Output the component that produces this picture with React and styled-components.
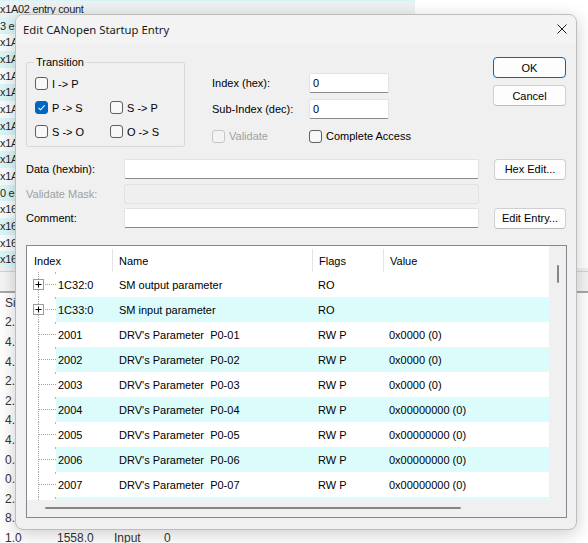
import React from 'react';
import styled, { createGlobalStyle } from 'styled-components';

const GlobalStyle = createGlobalStyle`
  html, body { margin: 0; padding: 0; background: #fff; }
  body { width: 588px; height: 543px; overflow: hidden; font-family: "Liberation Sans", Arial, sans-serif; }
  * { box-sizing: border-box; }
`;

/* ---------- background application ---------- */
const Screen = styled.div`
  position: relative;
  width: 588px;
  height: 543px;
  overflow: hidden;
  background: #fff;
  display: flex;
  flex-direction: column;
`;

const TopPane = styled.div`
  height: 268px;
  flex: none;
  overflow: hidden;
  display: flex;
`;

const TopList = styled.div`
  width: 415px;
  display: flex;
  flex-direction: column;
`;

const TopEdge = styled.div`
  height: 1px;
  flex: none;
  background: #d6f3f5;
`;

const BgRow = styled.div`
  height: 16.7px;
  flex: none;
  line-height: 16.7px;
  font-size: 11px;
  letter-spacing: -0.3px;
  color: #1e1e1e;
  white-space: nowrap;
  background: ${(p) => (p.$tone === 'cyan' ? '#dcf6f7' : p.$tone === 'gray' ? '#eef1f1' : '#f7fdfd')};
`;

const Splitter = styled.div`
  height: 3px;
  flex: none;
  background: #f0f0f0;
`;

const BottomHeader = styled.div`
  height: 22px;
  flex: none;
  background: #f4f4f4;
  border-top: 1px solid #d4d4d4;
  border-bottom: 2px solid #a8a8a8;
`;

const BottomList = styled.div`
  display: flex;
  flex-direction: column;
`;

const BottomRow = styled.div`
  height: 19.6px;
  flex: none;
  display: grid;
  grid-template-columns: 52px 57px 50px auto;
  align-items: center;
  padding-left: 5px;
  font-size: 12px;
  color: #333;
  white-space: nowrap;
`;

/* ---------- dialog ---------- */
const Dialog = styled.div`
  position: absolute;
  left: 15px;
  top: 14px;
  width: 562px;
  height: 516px;
  background: #f0f0f0;
  border: 1px solid #bdbdbd;
  border-radius: 8px;
  box-shadow: 0 4px 18px rgba(0, 0, 0, 0.2);
  display: flex;
  flex-direction: column;
  overflow: hidden;
  font-size: 11px;
  color: #000;
`;

const TitleBar = styled.div`
  height: 29px;
  flex: none;
  background: #f3f3f3;
  display: flex;
  align-items: center;
  justify-content: space-between;
  padding: 0 9px 1px 7px;
`;

const TitleText = styled.span`
  font-family: "Noto Sans", "Open Sans", sans-serif;
  font-size: 11.3px;
  color: #1a1a1a;
`;

const CloseIcon = styled.svg`
  width: 10px;
  height: 10px;
  display: block;
`;

const Body = styled.div`
  flex: 1;
  display: flex;
  flex-direction: column;
  padding: 13px 10px 11px 10px;
`;

const TopSection = styled.div`
  display: flex;
  align-items: flex-start;
  height: 90px;
`;

const GroupBox = styled.div`
  position: relative;
  margin-top: 5px;
  width: 159px;
  height: 85px;
  border: 1px solid #d9d9d9;
  border-radius: 2px;
`;

const GroupLegend = styled.span`
  position: absolute;
  left: 7px;
  top: -7px;
  padding: 0 2px;
  line-height: 13px;
  background: #f0f0f0;
`;

const CheckGrid = styled.div`
  display: grid;
  grid-template-columns: 75px auto;
  grid-auto-rows: 13px;
  row-gap: 11px;
  padding: 14px 0 0 8px;
`;

const CheckItem = styled.label`
  display: flex;
  align-items: center;
  gap: 4px;
  height: 13px;
  white-space: nowrap;
  color: ${(p) => (p.$disabled ? '#a0a0a0' : '#000')};
`;

const Box = styled.span`
  width: 13px;
  height: 13px;
  flex: none;
  border-radius: 3px;
  display: flex;
  align-items: center;
  justify-content: center;
  border: 1px solid ${(p) => (p.$checked ? '#0067c0' : p.$disabled ? '#c6c6c6' : '#5f5f5f')};
  background: ${(p) => (p.$checked ? '#0067c0' : p.$disabled ? '#f3f3f3' : '#f8f8f8')};
`;

const Fields = styled.div`
  margin-left: 27px;
  margin-top: 16px;
  display: grid;
  grid-template-columns: 97px 80px;
  grid-template-rows: 20px 20px 22px;
  row-gap: 6px;
  align-items: center;
  white-space: nowrap;
`;

const FieldLabel = styled.span`
  color: ${(p) => (p.$disabled ? '#a0a0a0' : '#000')};
  white-space: nowrap;
`;

const Input = styled.div`
  height: 20px;
  background: ${(p) => (p.$disabled ? '#efefef' : '#fff')};
  border: 1px solid ${(p) => (p.$disabled ? '#e2e2e2' : '#e3e3e3')};
  border-bottom-color: ${(p) => (p.$disabled ? '#e2e2e2' : '#8a8a8a')};
  border-radius: 2px;
  padding-left: 3px;
  display: flex;
  align-items: center;
`;

const ButtonColumn = styled.div`
  margin-left: auto;
  width: 73px;
  display: flex;
  flex-direction: column;
  gap: 7px;
`;

const Button = styled.div`
  height: 21px;
  width: ${(p) => p.$w || 73}px;
  border: 1px solid ${(p) => (p.$default ? '#0067c0' : '#d0d0d0')};
  border-bottom-color: ${(p) => (p.$default ? '#0067c0' : '#bcbcbc')};
  border-radius: 4px;
  background: #fdfdfd;
  display: flex;
  align-items: center;
  justify-content: center;
  justify-self: end;
  white-space: nowrap;
`;

const MidSection = styled.div`
  margin-top: 12px;
  display: grid;
  grid-template-columns: 98px 355px 1fr;
  grid-template-rows: 20px 20px 20px;
  row-gap: 4.5px;
  align-items: center;
`;

/* ---------- list view ---------- */
const ListBox = styled.div`
  margin-top: 17px;
  margin-right: -1px;
  height: 273px;
  flex: none;
  border: 1px solid #828790;
  display: grid;
  grid-template-columns: 1fr 17px;
  grid-template-rows: 1fr 17px;
  background: #fff;
`;

const ListContent = styled.div`
  overflow: hidden;
  display: flex;
  flex-direction: column;
`;

const HeaderRow = styled.div`
  height: 26px;
  flex: none;
  display: grid;
  grid-template-columns: 86px 200px 71px 1fr;
`;

const HeaderCell = styled.div`
  margin-top: 3px;
  height: 23px;
  display: flex;
  align-items: center;
  padding-left: ${(p) => p.$pad}px;
  border-right: ${(p) => (p.$last ? 'none' : '1px solid #e5e5e5')};
`;

const Row = styled.div`
  height: 25px;
  flex: none;
  display: grid;
  grid-template-columns: 29px 1fr;
`;

const TreeCell = styled.div`
  display: flex;
  align-items: center;
  padding-left: 6px;
  background-image:
    repeating-linear-gradient(to bottom, #a3a3a3 0 1px, transparent 1px 2px),
    repeating-linear-gradient(to right, #a3a3a3 0 1px, transparent 1px 2px);
  background-size: 1px 100%, 17px 1px;
  background-position: 11px 0, 12px 12px;
  background-repeat: no-repeat;
`;

const ExpandBox = styled.svg`
  width: 11px;
  height: 11px;
  display: block;
  background: #fff;
`;

const RowBody = styled.div`
  position: relative;
  display: grid;
  grid-template-columns: 57px 199px 71px 1fr;
  align-items: center;
  background: ${(p) => (p.$alt ? '#dcfcfc' : '#fff')};
  white-space: pre;
  &::before {
    content: '';
    position: absolute;
    left: -1px;
    top: 0;
    width: 1px;
    height: 2px;
    background: #5fd9e0;
  }
`;

const Cell = styled.span`
  padding-left: ${(p) => p.$pad}px;
  overflow: hidden;
`;

const VScroll = styled.div`
  background: #f0f0f0;
  display: flex;
  flex-direction: column;
  align-items: center;
  padding-top: 19px;
`;

const VThumb = styled.div`
  width: 2px;
  height: 18px;
  border-radius: 1px;
  background: #868686;
`;

const HScroll = styled.div`
  background: #f0f0f0;
  padding: 7px 0 0 18px;
`;

const HThumb = styled.div`
  width: 416px;
  height: 2px;
  border-radius: 1px;
  background: #868686;
`;

const Corner = styled.div`
  background: #f0f0f0;
`;

/* ---------- data ---------- */
const topRows = [
  'x1A02 entry count',
  '3 entries',
  'x1A02:01',
  'x1A02:02',
  'x1A02:03',
  'x1A03 clear',
  'x1A03 entry',
  'x1A03:01',
  'x1A03:02',
  'x1A03:03',
  'x1A03 count',
  '0 entries',
  'x1600 clear',
  'x1600 entry',
  'x1601 clear',
  'x1601 entry',
];

const bottomRows = [
  ['Si', '', '', ''],
  ['2.0', '', '', ''],
  ['4.0', '', '', ''],
  ['4.0', '', '', ''],
  ['2.0', '', '', ''],
  ['2.0', '', '', ''],
  ['4.0', '', '', ''],
  ['4.0', '', '', ''],
  ['0.1', '', '', ''],
  ['0.1', '', '', ''],
  ['2.0', '', '', ''],
  ['8.0', '', '', ''],
  ['1.0', '1558.0', 'Input', '0'],
];

const listRows = [
  { exp: true, idx: '1C32:0', name: 'SM output parameter', flags: 'RO', value: '' },
  { exp: true, idx: '1C33:0', name: 'SM input parameter', flags: 'RO', value: '' },
  { idx: '2001', name: "DRV's Parameter  P0-01", flags: 'RW P', value: '0x0000 (0)' },
  { idx: '2002', name: "DRV's Parameter  P0-02", flags: 'RW P', value: '0x0000 (0)' },
  { idx: '2003', name: "DRV's Parameter  P0-03", flags: 'RW P', value: '0x0000 (0)' },
  { idx: '2004', name: "DRV's Parameter  P0-04", flags: 'RW P', value: '0x00000000 (0)' },
  { idx: '2005', name: "DRV's Parameter  P0-05", flags: 'RW P', value: '0x00000000 (0)' },
  { idx: '2006', name: "DRV's Parameter  P0-06", flags: 'RW P', value: '0x00000000 (0)' },
  { idx: '2007', name: "DRV's Parameter  P0-07", flags: 'RW P', value: '0x00000000 (0)' },
  { idx: '2008', name: "DRV's Parameter  P0-08", flags: 'RW P', value: '0x00000000 (0)' },
];

const Check = ({ checked, disabled }) => (
  <Box $checked={checked} $disabled={disabled}>
    {checked && (
      <svg width="9" height="9" viewBox="0 0 9 9">
        <path d="M1.5 4.8 L3.6 6.8 L7.6 2.4" fill="none" stroke="#fff" strokeWidth="1.1" />
      </svg>
    )}
  </Box>
);

const CheckBox = ({ label, checked, disabled }) => (
  <CheckItem $disabled={disabled}>
    <Check checked={checked} disabled={disabled} />
    {label}
  </CheckItem>
);

export default function App() {
  return (
    <>
      <GlobalStyle />
      <Screen>
        <TopPane>
          <TopList>
            <TopEdge />
            {topRows.map((t, i) => (
              <BgRow key={i} $tone={i === 0 ? 'gray' : i % 2 ? 'cyan' : 'white'}>
                {t}
              </BgRow>
            ))}
          </TopList>
        </TopPane>
        <Splitter />
        <BottomHeader />
        <BottomList>
          {bottomRows.map((r, i) => (
            <BottomRow key={i}>
              {r.map((c, j) => (
                <span key={j}>{c}</span>
              ))}
            </BottomRow>
          ))}
        </BottomList>

        <Dialog>
          <TitleBar>
            <TitleText>Edit CANopen Startup Entry</TitleText>
            <CloseIcon viewBox="0 0 10 10">
              <path d="M0.5 0.5 L9.5 9.5 M9.5 0.5 L0.5 9.5" stroke="#1a1a1a" strokeWidth="1" />
            </CloseIcon>
          </TitleBar>
          <Body>
            <TopSection>
              <GroupBox>
                <GroupLegend>Transition</GroupLegend>
                <CheckGrid>
                  <CheckBox label="I -> P" />
                  <span />
                  <CheckBox label="P -> S" checked />
                  <CheckBox label="S -> P" />
                  <CheckBox label="S -> O" />
                  <CheckBox label="O -> S" />
                </CheckGrid>
              </GroupBox>
              <Fields>
                <FieldLabel>Index (hex):</FieldLabel>
                <Input>0</Input>
                <FieldLabel>Sub-Index (dec):</FieldLabel>
                <Input>0</Input>
                <CheckBox label="Validate" disabled />
                <CheckBox label="Complete Access" />
              </Fields>
              <ButtonColumn>
                <Button $default>OK</Button>
                <Button>Cancel</Button>
              </ButtonColumn>
            </TopSection>

            <MidSection>
              <FieldLabel>Data (hexbin):</FieldLabel>
              <Input />
              <Button $w={72}>Hex Edit...</Button>
              <FieldLabel $disabled>Validate Mask:</FieldLabel>
              <Input $disabled />
              <span />
              <FieldLabel>Comment:</FieldLabel>
              <Input />
              <Button $w={72}>Edit Entry...</Button>
            </MidSection>

            <ListBox>
              <ListContent>
                <HeaderRow>
                  <HeaderCell $pad={7}>Index</HeaderCell>
                  <HeaderCell $pad={6}>Name</HeaderCell>
                  <HeaderCell $pad={6}>Flags</HeaderCell>
                  <HeaderCell $pad={6} $last>Value</HeaderCell>
                </HeaderRow>
                {listRows.map((r, i) => (
                  <Row key={i}>
                    <TreeCell>
                      {r.exp && (
                        <ExpandBox viewBox="0 0 11 11">
                          <rect x="0.5" y="0.5" width="10" height="10" fill="#fff" stroke="#9a9a9a" />
                          <path d="M2.5 5.5 H8.5 M5.5 2.5 V8.5" stroke="#000" strokeWidth="1" />
                        </ExpandBox>
                      )}
                    </TreeCell>
                    <RowBody $alt={i % 2 === 1}>
                      <Cell $pad={2}>{r.idx}</Cell>
                      <Cell $pad={6}>{r.name}</Cell>
                      <Cell $pad={6}>{r.flags}</Cell>
                      <Cell $pad={6}>{r.value}</Cell>
                    </RowBody>
                  </Row>
                ))}
              </ListContent>
              <VScroll>
                <VThumb />
              </VScroll>
              <HScroll>
                <HThumb />
              </HScroll>
              <Corner />
            </ListBox>
          </Body>
        </Dialog>
      </Screen>
    </>
  );
}
